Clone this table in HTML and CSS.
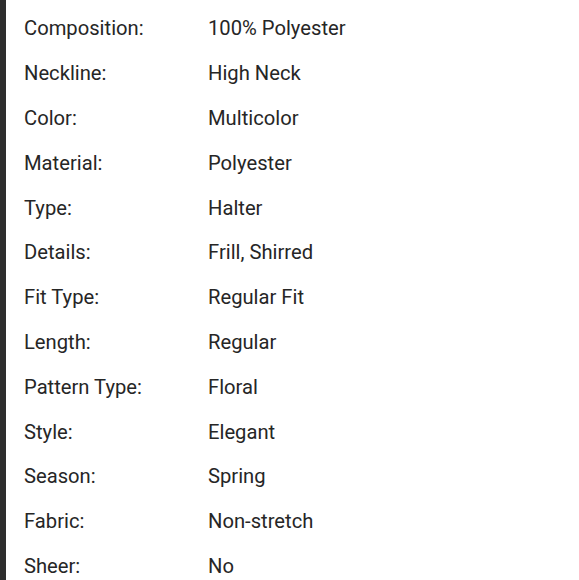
FILE: index.html
```html
<!DOCTYPE html>
<html>
<head>
<meta charset="utf-8">
<link rel="stylesheet" href="styles.css">
</head>
<body>
<div class="page">
  <div class="bar"></div>
  <div class="specs">
    <div class="row"><span class="k">Composition:</span><span class="v">100% Polyester</span></div>
    <div class="row"><span class="k">Neckline:</span><span class="v">High Neck</span></div>
    <div class="row"><span class="k">Color:</span><span class="v">Multicolor</span></div>
    <div class="row"><span class="k">Material:</span><span class="v">Polyester</span></div>
    <div class="row"><span class="k">Type:</span><span class="v">Halter</span></div>
    <div class="row"><span class="k">Details:</span><span class="v">Frill, Shirred</span></div>
    <div class="row"><span class="k">Fit Type:</span><span class="v">Regular Fit</span></div>
    <div class="row"><span class="k">Length:</span><span class="v">Regular</span></div>
    <div class="row"><span class="k">Pattern Type:</span><span class="v">Floral</span></div>
    <div class="row"><span class="k">Style:</span><span class="v">Elegant</span></div>
    <div class="row"><span class="k">Season:</span><span class="v">Spring</span></div>
    <div class="row"><span class="k">Fabric:</span><span class="v">Non-stretch</span></div>
    <div class="row"><span class="k">Sheer:</span><span class="v">No</span></div>
  </div>
</div>
</body>
</html>
```
FILE: styles.css
```css
html, body {
  margin: 0;
  padding: 0;
  background: #fff;
}
.page {
  display: flex;
  height: 580px;
  overflow: hidden;
}
.bar {
  width: 6px;
  flex: none;
  background: #2e2e2e;
}
.specs {
  padding-left: 18px;
  padding-top: 6px;
  font-family: Roboto, "Liberation Sans", sans-serif;
  font-size: 20.2px;
  color: #262626;
}
.row {
  display: flex;
  height: 44.8px;
  align-items: center;
}
.k {
  width: 184px;
  flex: none;
}
```
